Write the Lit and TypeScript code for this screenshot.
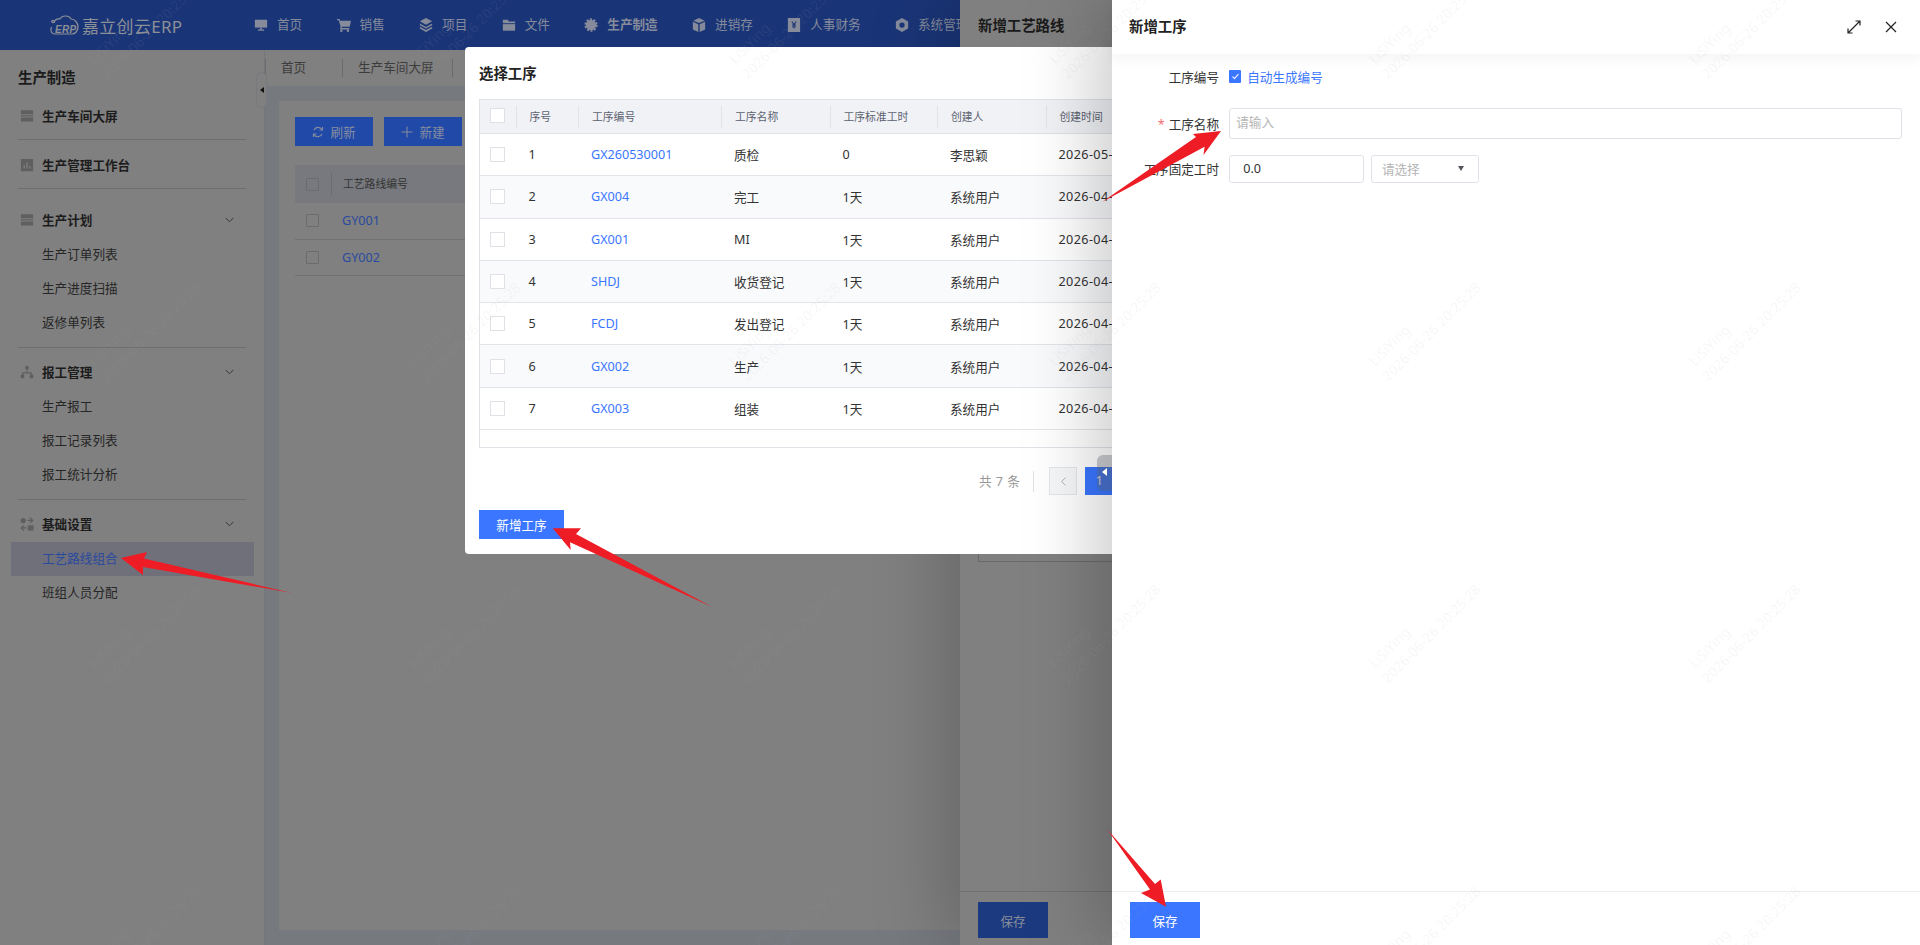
import { LitElement, html, css, svg } from "lit";
import { customElement } from "lit/decorators.js";

const NAV = [
  ["monitor", "首页"],
  ["cart", "销售"],
  ["layers", "项目"],
  ["folder", "文件"],
  ["gear", "生产制造"],
  ["box", "进销存"],
  ["money", "人事财务"],
  ["hex", "系统管理"],
];

const PROCS = [
  ["1", "GX260530001", "质检", "0", "李思颖", "2026-05-30 10:12:45"],
  ["2", "GX004", "完工", "1天", "系统用户", "2026-04-18 09:00:00"],
  ["3", "GX001", "MI", "1天", "系统用户", "2026-04-18 09:00:00"],
  ["4", "SHDJ", "收货登记", "1天", "系统用户", "2026-04-18 09:00:00"],
  ["5", "FCDJ", "发出登记", "1天", "系统用户", "2026-04-18 09:00:00"],
  ["6", "GX002", "生产", "1天", "系统用户", "2026-04-18 09:00:00"],
  ["7", "GX003", "组装", "1天", "系统用户", "2026-04-18 09:00:00"],
];

const HEADS = ["序号", "工序编号", "工序名称", "工序标准工时", "创建人", "创建时间"];

function icon(name: string) {
  const shapes: Record<string, unknown> = {
    monitor: svg`<path d="M1 2h14v9H1z"/><path d="M7 11h2v2H7z"/><path d="M4.5 13h7v1.5h-7z"/>`,
    cart: svg`<path d="M0 1h3l.6 2H16l-1.5 7H5.2L5.6 11.5H14V13H3.6L4 9.5 2 2.5H0z"/><circle cx="5" cy="14.6" r="1.4"/><circle cx="12.5" cy="14.6" r="1.4"/>`,
    layers: svg`<path d="M8 0l7 3.8-7 3.8-7-3.8z"/><path d="M1 6.4l7 3.8 7-3.8v1.8l-7 3.8-7-3.8z"/><path d="M1 10l7 3.8 7-3.8v2L8 16l-7-4z"/>`,
    folder: svg`<path d="M1 2h5.5L8 4h7v2H1z"/><path d="M1 7h14v7.5H1z"/>`,
    gear: svg`<circle cx="8" cy="8" r="6"/><circle cx="8" cy="8" r="6.6" fill="none" stroke="currentColor" stroke-width="2" stroke-dasharray="2.4 1.75"/>`,
    box: svg`<path d="M8 0l6.5 3L8 5.8 1.5 3z"/><path d="M1 4.4l6.2 2.7V16L1 13z"/><path d="M15 4.4L8.8 7.1V16l6.2-3z"/>`,
    money: svg`<path d="M1 0h14v16H1z"/><path d="M5.5 4L8 7.5 10.5 4M8 7.5V12M5.8 8h4.4M5.8 10h4.4" fill="none" stroke="#1a3577" stroke-width="1.2"/>`,
    hex: svg`<path fill-rule="evenodd" d="M8 0l7 4v8l-7 4-7-4V4zM8 5a3 3 0 100 6 3 3 0 000-6z"/>`,
    bars: svg`<path d="M1 1.5h14v4.6H1zM1 7.2h14v1.4H1zM1 9.8h14v4.6H1z"/>`,
    chart: svg`<path fill-rule="evenodd" d="M1 1h14v14H1zM4 8v4h1.5V8zM7.3 5v7h1.5V5zM10.6 9v3h1.5V9z"/>`,
    tree: svg`<circle cx="8" cy="3" r="2.2"/><circle cx="2.8" cy="13" r="2.3"/><circle cx="13.2" cy="13" r="2.3"/><path d="M7.4 5h1.2v3.4H13.6v3h-1.2V9.6H3.6v1.8H2.4v-3h5z"/>`,
    setting: svg`<circle cx="3.6" cy="4" r="3"/><path d="M8.500 3.200h4.300L11 1.400l1-1 3.500 3.500L12 7.400l-1-1 1.800-1.800H8.500z"/><path d="M9 9.500h6.500V15.500H9z"/><path d="M7.500 11.800H3.200L5 10l-1-1-3.500 3.500L4 16l1-1-1.800-1.800h4.300z"/>`,
  };
  return html`<svg class="ico" viewBox="0 0 16 16" fill="currentColor">${shapes[name]}</svg>`;
}

const chevron = html`<svg class="chev" viewBox="0 0 10 6" fill="none" stroke="currentColor" stroke-width="1"><path d="M.7.7L5 5l4.3-4.3"/></svg>`;

@customElement("app-root")
export class AppRoot extends LitElement {
  static styles = css`
    :host {
      display: block;
      position: relative;
      width: 1920px;
      height: 945px;
      overflow: hidden;
      font-family: "Noto Sans", "Noto Sans CJK SC", sans-serif;
      font-size: 12.6px;
      color: #1a1a1a;
      background: #808080;
    }
    * { box-sizing: border-box; }
    .ico { width: 14px; height: 14px; flex: none; display: block; }

    /* base page, already dimmed by the mask */
    .page { display: flex; flex-direction: column; height: 945px; }
    .top {
      height: 50px;
      flex: none;
      background: #1a3577;
      color: #858b9b;
      display: flex;
      align-items: center;
    }
    .logo {
      width: 254px;
      padding-left: 49px;
      display: flex;
      align-items: center;
      gap: 3px;
      font-size: 17px;
      letter-spacing: 0.3px;
      color: #8b8f98;
      flex: none;
    }
    .logo svg { width: 30px; height: 24px; }
    .nav { display: flex; gap: 34.4px; }
    .nav div { display: flex; align-items: center; gap: 9px; white-space: nowrap; line-height: 20px; }
    .nav .on { font-weight: 600; }

    .below { flex: 1; display: flex; min-height: 0; }
    .side {
      width: 265px;
      flex: none;
      position: relative;
      border-right: 1px solid #75777c;
      padding: 0 18px;
    }
    .side h2 { margin: 0; font-size: 14.4px; font-weight: 600; line-height: 24px; padding-top: 16px; height: 41px; }
    .group { border-bottom: 1px solid #6e6e6e; padding: 6px 0 7px; }
    .group.single { padding: 8px 0 6px; }
    .group.single .row { height: 34px; }
    .group.wide { padding-top: 13px; }
    .group.last { border-bottom: 0; }
    .row {
      height: 36px;
      display: flex;
      align-items: center;
      gap: 8px;
      padding: 0 12px 1px 2px;
      font-weight: 600;
      color: #1c1c1c;
    }
    .row .ico { color: #5f5f5f; }
    .row span { flex: 1; }
    .chev { width: 9px; height: 6px; color: #2e2e2e; }
    .sub { height: 34px; line-height: 34px; padding-left: 24px; color: #262626; }
    .sub.active { background: #70707a; color: #2a4a9e; margin-left: -7px; width: 243px; padding-left: 31px; }
    .handle {
      position: absolute;
      right: -3px;
      top: 22px;
      width: 11px;
      height: 36px;
      border: 1px solid #77797e;
      border-radius: 6px;
      background: #808080;
      display: flex;
      align-items: center;
      justify-content: center;
    }
    .handle i { border: 3.5px solid transparent; border-right: 4px solid #111; border-left: 0; }

    .content { flex: 1; display: flex; flex-direction: column; background: #76797e; min-width: 0; }
    .tabs { height: 36px; flex: none; background: #808080; display: flex; align-items: center; color: #3c3c3c; }
    .tabs div { height: 18px; line-height: 18px; border-left: 1px solid #6a6a6a; padding: 0 18px 0 15px; white-space: nowrap; }
    .tabs div:first-child { width: 77px; }
    .tabs div:last-child { border-right: 1px solid #6a6a6a; }
    .wrap { flex: 1; padding: 15px 14px; min-height: 0; }
    .card { height: 100%; background: #808080; padding: 16px 0 0 16px; }
    .tools { display: flex; gap: 11px; }
    .tool {
      width: 78px;
      height: 29px;
      background: #2049a8;
      color: #868d9f;
      display: flex;
      align-items: center;
      justify-content: center;
      gap: 6px;
    }
    .tool svg { width: 12px; height: 12px; }
    .mini { margin-top: 19px; font-size: 10.8px; }
    .mini-head { height: 38px; background: #77797e; display: flex; align-items: center; color: #333; }
    .mini-row { height: 36.5px; display: flex; align-items: center; border-bottom: 1px solid #717171; color: #2a4a9e; font-size: 12.6px; }
    .box { width: 13px; height: 13px; margin-left: 11px; border: 1px solid #6c6c6c; border-radius: 1px; flex: none; }
    .mini-head .lab { margin-left: 12px; border-left: 1px solid #6c6c6c; padding-left: 11px; line-height: 22px; }
    .mini-row .lab { margin-left: 23px; }

    /* drawers and dialog lie over the page */
    .drawer-back {
      position: absolute;
      left: 960px;
      right: 0;
      top: 0;
      bottom: 0;
      background: #808080;
      box-shadow: -16px 0 70px rgba(0, 0, 0, 0.2);
      display: flex;
      flex-direction: column;
    }
    .drawer-back h3 { margin: 0; padding: 14px 18px 0; font-size: 14.4px; font-weight: 600; line-height: 24px; height: 54px; flex: none; }
    .back-body { flex: 1; padding: 46px 0 0 18px; }
    .back-body div { height: 462px; border: 1px solid #6a6a6a; }
    .foot { height: 54px; flex: none; padding: 10px 18px; border-top: 1px solid #707070; }
    .save { width: 70px; height: 36px; display: flex; align-items: center; justify-content: center; }
    .drawer-back .save { background: #1b3a80; color: #868b98; }

    .modal {
      position: absolute;
      left: 465px;
      top: 47px;
      width: 990px;
      height: 507px;
      background: #fff;
      border-radius: 4px;
      padding-left: 14px;
      color: #333;
    }
    .modal h3 { margin: 0; height: 52px; padding-top: 15px; line-height: 24px; font-size: 14.4px; font-weight: 600; color: #222; }
    .table { width: 960px; height: 349px; border: 1px solid #e0e2e8; border-right: 0; }
    .tr { display: grid; grid-template-columns: 35.5px 62.5px 143px 108.5px 107.5px 108.5px 1fr; align-items: center; }
    .tr > div { padding-left: 13px; white-space: nowrap; }
    .thead { height: 34px; background: #f1f2f6; border-bottom: 1px solid #e0e2e8; font-size: 10.8px; color: #5c6270; }
    .thead > div + div { border-left: 1px solid #e1e3e8; line-height: 22px; }
    .tbody { height: 42.3px; border-bottom: 1px solid #e2e4ea; }
    .tbody:nth-child(odd) { background: #f9fafc; }
    .tbody .date { letter-spacing: 0.4px; }
    .cb { width: 15px; height: 15px; border: 1px solid #dfe1e6; background: #fff; margin-left: -3px; }
    .thead .cb { margin-top: -3px; }
    .link { color: #3a76ff; }
    .pager { display: flex; align-items: center; margin: 19px 0 0 500px; height: 28px; color: #999; gap: 0; }
    .total { letter-spacing: 0.5px; padding-right: 13px; border-right: 1px solid #e2e2e2; line-height: 21px; margin-right: 15px; }
    .prev { width: 28px; height: 28px; border: 1px solid #e4e6ea; background: #f7f8fa; display: flex; align-items: center; justify-content: center; margin-right: 8px; }
    .prev svg { width: 5px; height: 9px; color: #aeb2ba; }
    .page1 { width: 28px; height: 28px; background: #3a76ff; color: #fff; text-align: center; line-height: 28px; }
    .addbtn {
      width: 85px;
      height: 29px;
      margin-top: 15px;
      background: #3a76ff;
      color: #fff;
      display: flex;
      align-items: center;
      justify-content: center;
    }

    .drawer {
      position: absolute;
      left: 1112px;
      right: 0;
      top: 0;
      bottom: 0;
      background: #fff;
      box-shadow: -16px 0 70px rgba(0, 0, 0, 0.21);
      display: flex;
      flex-direction: column;
      color: #333;
    }
    .grip {
      position: absolute;
      left: -15px;
      top: 455px;
      width: 15px;
      height: 36px;
      border-radius: 6px 0 0 6px;
      background: rgba(90, 95, 105, 0.35);
      display: flex;
      align-items: center;
      justify-content: center;
    }
    .grip i { border: 4px solid transparent; border-right: 5px solid #fff; border-left: 0; margin-top: -2px; }
    .dhead {
      height: 54px;
      flex: none;
      display: flex;
      align-items: center;
      padding: 0 22px 0 17px;
      box-shadow: 0 4px 14px rgba(0, 0, 0, 0.05);
    }
    .dhead b { flex: 1; font-size: 14.4px; font-weight: 600; color: #222; margin-top: -4px; }
    .dhead svg { width: 14px; height: 14px; margin-left: 23px; color: #222; }
    .form { flex: 1; padding: 8px 18px 0 0; }
    .f { display: flex; align-items: center; gap: 10.2px; margin-bottom: 16px; min-height: 28px; }
    .f:first-child { margin-bottom: 18px; }
    .f label { width: 107px; text-align: right; flex: none; white-space: nowrap; }
    .star { color: #f56c6c; margin-right: 4px; }
    .auto { display: flex; align-items: center; gap: 6px; color: #3a76ff; }
    .tick { width: 12px; height: 13px; background: #3a76ff; border-radius: 1px; display: flex; align-items: center; justify-content: center; }
    .tick svg { width: 9px; height: 9px; }
    .input { border: 1px solid #e1e2e9; border-radius: 3px; height: 30.5px; line-height: 27px; padding-left: 6px; color: #b5b5b5; flex: 1; }
    .num { flex: none; width: 135px; height: 28px; line-height: 26px; padding-left: 13px; color: #333; }
    .sel {
      flex: none;
      width: 108px;
      height: 28px;
      border: 1px solid #e1e2e9;
      border-radius: 3px;
      margin-left: -3.5px;
      padding: 0 14px 0 10px;
      color: #b5b5b5;
      display: flex;
      align-items: center;
      justify-content: space-between;
    }
    .sel i { border: 3.5px solid transparent; border-top: 5px solid #55555f; border-bottom: 0; }
    .drawer .foot { border-top-color: #ececec; }
    .drawer .save { background: #3a76ff; color: #fff; }

    .over { position: absolute; left: 0; top: 0; width: 1920px; height: 945px; pointer-events: none; }
    .wm { font-family: "Noto Sans", sans-serif; font-size: 14px; fill: rgba(170, 170, 170, 0.1); }
  `;

  renderWatermarks() {
    const out = [];
    for (const y of [65, 367, 669, 971]) {
      for (let x = -225; x < 1920; x += 320) {
        out.push(svg`<text class="wm" x=${x} y=${y} transform="rotate(-45 ${x} ${y})">LiSiYing</text>
          <text class="wm" x=${x + 13} y=${y + 15} transform="rotate(-45 ${x + 13} ${y + 15})">2026-06-26 20:25:28</text>`);
      }
    }
    return out;
  }

  render() {
    return html`
      <div class="page">
        <div class="top">
          <div class="logo">
            <svg viewBox="0 0 30 24" fill="none" stroke="currentColor" stroke-width="1.2">
              <path d="M5 10C6 5 10 6 11 6 13 2 20 2 22 6c4 0 7 4 7 8 0 4-3 7-6 7H6C2 21 1 17 2.500 14" />
              <circle cx="4" cy="8.500" r="1.200" />
              <text x="6" y="19.500" font-size="10" font-style="italic" font-weight="700" fill="currentColor" stroke="none" font-family="Liberation Sans">ERP</text>
            </svg>
            <span>嘉立创云ERP</span>
          </div>
          <div class="nav">
            ${NAV.map(([i, t]) => html`<div class=${t === "生产制造" ? "on" : ""}>${icon(i)}${t}</div>`)}
          </div>
        </div>
        <div class="below">
          <div class="side">
            <h2>生产制造</h2>
            <div class="group single"><div class="row">${icon("bars")}<span>生产车间大屏</span></div></div>
            <div class="group single"><div class="row">${icon("chart")}<span>生产管理工作台</span></div></div>
            <div class="group wide">
              <div class="row">${icon("bars")}<span>生产计划</span>${chevron}</div>
              <div class="sub">生产订单列表</div>
              <div class="sub">生产进度扫描</div>
              <div class="sub">返修单列表</div>
            </div>
            <div class="group">
              <div class="row">${icon("tree")}<span>报工管理</span>${chevron}</div>
              <div class="sub">生产报工</div>
              <div class="sub">报工记录列表</div>
              <div class="sub">报工统计分析</div>
            </div>
            <div class="group last">
              <div class="row">${icon("setting")}<span>基础设置</span>${chevron}</div>
              <div class="sub active">工艺路线组合</div>
              <div class="sub">班组人员分配</div>
            </div>
            <div class="handle"><i></i></div>
          </div>
          <div class="content">
            <div class="tabs"><div>首页</div><div>生产车间大屏</div></div>
            <div class="wrap">
              <div class="card">
                <div class="tools">
                  <div class="tool">
                    <svg viewBox="0 0 12 12" fill="none" stroke="currentColor" stroke-width="1.200"><path d="M10 3.500A4.500 4.500 0 002 4M2 8.500A4.500 4.500 0 0010 8"/><path d="M10.500 1v3h-3M1.500 11V8h3"/></svg>
                    刷新
                  </div>
                  <div class="tool">
                    <svg viewBox="0 0 12 12" fill="none" stroke="currentColor" stroke-width="1"><path d="M6 .5v11M.5 6h11"/></svg>
                    新建
                  </div>
                </div>
                <div class="mini">
                  <div class="mini-head"><div class="box"></div><div class="lab">工艺路线编号</div></div>
                  <div class="mini-row"><div class="box"></div><div class="lab">GY001</div></div>
                  <div class="mini-row"><div class="box"></div><div class="lab">GY002</div></div>
                </div>
              </div>
            </div>
          </div>
        </div>
      </div>

      <div class="drawer-back">
        <h3>新增工艺路线</h3>
        <div class="back-body"><div></div></div>
        <div class="foot"><div class="save">保存</div></div>
      </div>

      <div class="modal">
        <h3>选择工序</h3>
        <div class="table">
          <div class="tr thead">
            <div><div class="cb"></div></div>
            ${HEADS.map((h) => html`<div>${h}</div>`)}
          </div>
          ${PROCS.map(
            (r) => html`<div class="tr tbody">
              <div><div class="cb"></div></div>
              <div>${r[0]}</div>
              <div class="link">${r[1]}</div>
              <div>${r[2]}</div>
              <div>${r[3]}</div>
              <div>${r[4]}</div>
              <div class="date">${r[5]}</div>
            </div>`
          )}
        </div>
        <div class="pager">
          <div class="total">共 7 条</div>
          <div class="prev"><svg viewBox="0 0 5 9" fill="none" stroke="currentColor"><path d="M4.500.5L.7 4.500l3.800 4"/></svg></div>
          <div class="page1">1</div>
        </div>
        <div class="addbtn">新增工序</div>
      </div>

      <div class="drawer">
        <div class="grip"><i></i></div>
        <div class="dhead">
          <b>新增工序</b>
          <svg viewBox="0 0 14 14" fill="none" stroke="currentColor" stroke-width="1.200"><path d="M1 13L13 1M8.500 1H13v4.500M1 8.500V13h4.500"/></svg>
          <svg viewBox="0 0 14 14" fill="none" stroke="currentColor" stroke-width="1.200"><path d="M2 2l10 10M12 2L2 12"/></svg>
        </div>
        <div class="form">
          <div class="f">
            <label>工序编号</label>
            <div class="auto">
              <div class="tick"><svg viewBox="0 0 9 9" fill="none" stroke="#fff" stroke-width="1.100"><path d="M1.500 4.500l2 2.200 4-4.700"/></svg></div>
              自动生成编号
            </div>
          </div>
          <div class="f">
            <label><span class="star">*</span>工序名称</label>
            <div class="input">请输入</div>
          </div>
          <div class="f">
            <label>工序固定工时</label>
            <div class="input num">0.0</div>
            <div class="sel">请选择<i></i></div>
          </div>
        </div>
        <div class="foot"><div class="save">保存</div></div>
      </div>

      <svg class="over" viewBox="0 0 1920 945">
        ${this.renderWatermarks()}
        <g fill="#ee1c25">
          <polygon points="121,558 147,552 144,558.500 292,593 143,567 143,575" />
          <polygon points="552.700,528.300 581,528.300 576,534 711.700,606.700 570,542.300 570.700,550" />
          <polygon points="1221,131 1193,134 1196,137 1102,202 1204.600,146.700 1203.500,155" />
          <polygon points="1107,829 1155,884 1160.700,879.500 1166,906.700 1141,893 1150,889.500" />
        </g>
      </svg>
    `;
  }
}
